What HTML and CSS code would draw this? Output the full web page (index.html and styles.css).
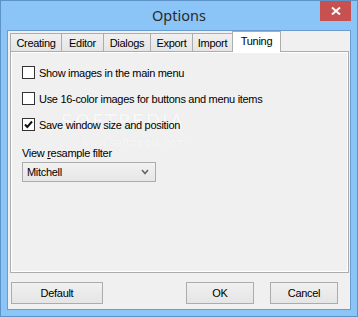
FILE: index.html
```html
<!DOCTYPE html>
<html lang="en">
<head>
  <meta charset="UTF-8" />
  <title>Options</title>
  <link rel="stylesheet" href="styles.css">
</head>
<body>
  <div class="window">
    <div class="titlebar">
      <span></span>
      <div class="title">Options</div>
      <div class="close">
        <svg width="10" height="8" viewBox="0 0 10 8">
          <path d="M1 0.5 L9 7.5 M9 0.5 L1 7.5" stroke="#fff" stroke-width="2" fill="none"/>
        </svg>
      </div>
    </div>

    <div class="client">
      <div class="tabs">
        <div class="tab w-creating">Creating</div>
        <div class="tab w-editor">Editor</div>
        <div class="tab w-dialogs">Dialogs</div>
        <div class="tab w-export">Export</div>
        <div class="tab w-import">Import</div>
        <div class="tab w-tuning active">Tuning</div>
      </div>

      <div class="panel">
        <div class="watermark">SOFTPEDIA<sup>™</sup></div>
        <div class="watermark small">www.softpedia.com</div>

        <label class="check">
          <span class="box"></span>
          Show images in the main menu
        </label>
        <label class="check">
          <span class="box"></span>
          Use 16-color images for buttons and menu items
        </label>
        <label class="check">
          <span class="box">
            <svg width="11" height="11" viewBox="0 0 11 11">
              <path d="M2 5.5 L4.3 8 L9 2.5" stroke="#111" stroke-width="2" fill="none"/>
            </svg>
          </span>
          Save window size and position
        </label>

        <div class="field">
          <div class="field-label">View <u>r</u>esample filter</div>
          <div class="select">
            <span>Mitchell</span>
            <svg width="8" height="6" viewBox="0 0 8 6">
              <path d="M1 1 L4 4.5 L7 1" stroke="#666" stroke-width="1.6" fill="none"/>
            </svg>
          </div>
        </div>
      </div>

      <div class="buttons">
        <div class="btn wide">Default</div>
        <div class="spacer"></div>
        <div class="btn">OK</div>
        <div class="btn">Cancel</div>
      </div>
    </div>
  </div>
</body>
</html>
```

FILE: styles.css
```css
* {
  margin: 0;
  padding: 0;
  box-sizing: border-box;
}

body {
  width: 358px;
  height: 317px;
  font-family: "Liberation Sans", Arial, sans-serif;
  font-size: 11px;
  letter-spacing: -0.3px;
  color: #000;
}

.window {
  width: 358px;
  height: 317px;
  background: #8bc4f6;
  border: 1px solid #5e93c8;
  padding: 0 6px 6px;
  display: flex;
  flex-direction: column;
}

.titlebar {
  height: 29px;
  display: grid;
  grid-template-columns: 1fr auto 1fr;
  align-items: start;
}

.title {
  font-family: "Noto Sans", "Open Sans", sans-serif;
  font-size: 14.5px;
  letter-spacing: 0;
  color: #2a2a2a;
  line-height: 29px;
}

.close {
  justify-self: end;
  width: 31px;
  height: 20px;
  background: #c75050;
  display: flex;
  align-items: center;
  justify-content: center;
}

.client {
  flex: 1;
  background: #f0f0f0;
  border: 1px solid #6b9ccd;
  display: flex;
  flex-direction: column;
}

.tabs {
  display: flex;
  align-items: flex-end;
  height: 20px;
  padding-left: 2px;
  position: relative;
  z-index: 1;
}

.tab {
  height: 18px;
  border: 1px solid #acacac;
  border-bottom: none;
  margin-right: -1px;
  background: linear-gradient(#f0f0f0, #e5e5e5);
  text-align: center;
  line-height: 18px;
}

.tab.active {
  height: 21px;
  margin-bottom: -1px;
  background: #fff;
  line-height: 18px;
  padding-bottom: 2px;
}

.w-creating { width: 52px; }
.w-editor { width: 43px; }
.w-dialogs { width: 48px; }
.w-export { width: 43px; }
.w-import { width: 41px; }
.w-tuning { width: 49px; }

.panel {
  position: relative;
  margin-left: 2px;
  width: 339px;
  height: 222px;
  border: 1px solid #acacac;
  box-shadow: inset 1px 1px 0 #fff, inset -1px -1px 0 #fff;
  padding: 14px 11px 0;
  display: flex;
  flex-direction: column;
}

.check {
  position: relative;
  display: flex;
  align-items: center;
  gap: 4px;
  height: 13px;
  margin-bottom: 13px;
}

.box {
  width: 13px;
  height: 13px;
  border: 1px solid #333;
  background: #fff;
  display: flex;
  align-items: center;
  justify-content: center;
}

.field {
  position: relative;
  margin-top: 3px;
}

.field-label {
  line-height: 13px;
  margin-bottom: 2px;
}

.select {
  width: 134px;
  height: 20px;
  border: 1px solid #acacac;
  background: linear-gradient(#f2f2f2, #e6e6e6);
  display: flex;
  align-items: center;
  justify-content: space-between;
  padding: 0 6px 0 4px;
}

.watermark {
  position: absolute;
  left: 50px;
  top: 58px;
  font-family: "DejaVu Sans", sans-serif;
  font-size: 19px;
  letter-spacing: 2px;
  color: #f9f9f9;
  text-shadow: 0 0 1px #e2e2e2;
}

.watermark sup {
  font-size: 7px;
}

.watermark.small {
  left: 70px;
  top: 85px;
  font-size: 10px;
  letter-spacing: 0.5px;
}

.buttons {
  display: flex;
  gap: 16px;
  padding: 9px 12px 0 3px;
}

.spacer {
  flex: 1;
}

.btn {
  width: 68px;
  height: 22px;
  border: 1px solid #acacac;
  background: linear-gradient(#f0f0f0, #e5e5e5);
  text-align: center;
  line-height: 20px;
}

.btn.wide {
  width: 92px;
}
```
